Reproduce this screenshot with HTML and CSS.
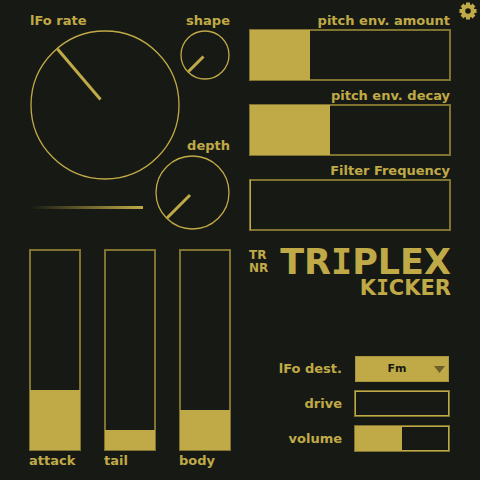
FILE: index.html
```html
<!DOCTYPE html>
<html lang="en">
<head>
<meta charset="utf-8">
<meta name="viewport" content="width=device-width, initial-scale=1">
<title>Triplex Kicker</title>
<link rel="stylesheet" href="styles.css">
</head>
<body>
<main class="panel">
  <section class="knobs">
    <div class="lfo">
      <label class="label" for="rate">lFo rate</label>
      <div class="knob knob-large">
        <svg viewBox="0 0 150 150" aria-hidden="true"><circle cx="75" cy="75" r="74"/><path d="M27.5 19L70.500 69.500"/></svg>
        <input id="rate" type="range" value="35">
      </div>
      <div class="trace"></div>
    </div>
    <div class="side">
      <div class="side-item">
        <label class="label" for="shape">shape</label>
        <div class="knob knob-small">
          <svg viewBox="0 0 50 50" aria-hidden="true"><circle cx="25" cy="25" r="24"/><path d="M23.500 26.500L8.500 41.500"/></svg>
          <input id="shape" type="range" value="0">
        </div>
      </div>
      <div class="side-item">
        <label class="label" for="depth">depth</label>
        <div class="knob knob-medium">
          <svg viewBox="0 0 75 75" aria-hidden="true"><circle cx="37.500" cy="37.500" r="36.500"/><path d="M35 40L12 63"/></svg>
          <input id="depth" type="range" value="0">
        </div>
      </div>
    </div>
  </section>

  <section class="bars">
    <div class="bar-row">
      <label class="label" for="amount">pitch env. amount</label>
      <input class="bar" id="amount" type="range" value="30" style="--value: 30%">
    </div>
    <div class="bar-row">
      <label class="label" for="decay">pitch env. decay</label>
      <input class="bar" id="decay" type="range" value="40" style="--value: 40%">
    </div>
    <div class="bar-row">
      <label class="label" for="filter">Filter Frequency</label>
      <input class="bar" id="filter" type="range" value="0" style="--value: 0%">
    </div>
  </section>

  <section class="columns">
    <div class="column">
      <input class="bar bar-vertical" id="attack" type="range" value="30" style="--value: 30%">
      <label class="label" for="attack">attack</label>
    </div>
    <div class="column">
      <input class="bar bar-vertical" id="tail" type="range" value="10" style="--value: 10%">
      <label class="label" for="tail">tail</label>
    </div>
    <div class="column">
      <input class="bar bar-vertical" id="body" type="range" value="20" style="--value: 20%">
      <label class="label" for="body">body</label>
    </div>
  </section>

  <section class="output">
    <header class="brand">
      <div class="brand-top">
        <div class="maker">TR<br>NR</div>
        <h1 class="name">TR<span class="slab">I</span>PLEX</h1>
      </div>
      <p class="model">K<span class="slab">I</span>CKER</p>
    </header>
    <div class="settings">
      <label class="label" for="dest">lFo dest.</label>
      <div class="picker">
        <select id="dest"><option>Fm</option></select>
        <svg class="arrow" viewBox="0 0 11 7" aria-hidden="true"><path d="M0 0H11L5.500 7Z"/></svg>
      </div>
      <label class="label" for="drive">drive</label>
      <input class="bar bar-small" id="drive" type="range" value="0" style="--value: 0%">
      <label class="label" for="volume">volume</label>
      <input class="bar bar-small" id="volume" type="range" value="50" style="--value: 50%">
    </div>
  </section>
</main>
<button class="gear" type="button" aria-label="Settings">
  <svg viewBox="-9 -9 18 18" aria-hidden="true">
    <g><rect x="-2" y="-8.500" width="4" height="17"/><rect x="-2" y="-8.500" width="4" height="17" transform="rotate(45)"/><rect x="-2" y="-8.500" width="4" height="17" transform="rotate(90)"/><rect x="-2" y="-8.500" width="4" height="17" transform="rotate(135)"/><circle r="6.800"/></g>
    <circle class="gear-hole" r="2.800"/>
  </svg>
</button>
</body>
</html>
```

FILE: styles.css
```css
:root {
  --ground: #171a14;
  --gold: #c0aa47;
  --dim: #80732f;
}

* {
  box-sizing: border-box;
}

body {
  margin: 0;
  min-height: 100vh;
  background: var(--ground);
  color: var(--gold);
  font-family: "DejaVu Sans", sans-serif;
  font-size: 13px;
  font-weight: bold;
}

.panel {
  display: grid;
  grid-template-columns: 1fr 1fr;
  gap: 18px;
  padding: 13px 29px 0;
}

.label {
  display: block;
  line-height: 16px;
  white-space: nowrap;
}

/* Knobs */
.knobs {
  display: flex;
  justify-content: space-between;
  padding: 0 1px 1px;
}

.lfo {
  width: 150px;
}

.side {
  display: flex;
  flex-direction: column;
  justify-content: space-between;
  align-items: flex-end;
  width: 50px;
}

.side-item {
  display: flex;
  flex-direction: column;
  align-items: flex-end;
}

.knob {
  position: relative;
  margin-top: 1px;
}

.knob-large {
  width: 150px;
  height: 150px;
}

.knob-medium {
  width: 75px;
  height: 75px;
}

.knob-small {
  width: 50px;
  height: 50px;
}

.knob svg {
  display: block;
  fill: none;
  stroke: var(--gold);
}

.knob circle {
  stroke-width: 1.3px;
}

.knob path {
  stroke-width: 3px;
}

.knob input {
  position: absolute;
  inset: 0;
  width: 100%;
  height: 100%;
  margin: 0;
  opacity: 0;
}

.trace {
  width: 113px;
  height: 3px;
  margin-top: 26px;
  background: linear-gradient(to right, transparent, var(--gold));
}

/* Bars */
.bar {
  appearance: none;
  display: block;
  width: 100%;
  height: 52px;
  margin: 0;
  border: 1px solid var(--dim);
  background:
    linear-gradient(var(--gold), var(--gold)) left / max(1px, var(--value)) 100% no-repeat,
    linear-gradient(var(--ground), var(--ground)) center / calc(100% - 2px) calc(100% - 2px) no-repeat,
    var(--dim);
}

.bar::-webkit-slider-thumb {
  appearance: none;
  width: 1px;
  height: 1px;
  background: transparent;
}

.bars {
  display: flex;
  flex-direction: column;
  gap: 7px;
}

.bar-row .label {
  padding-right: 1px;
  text-align: right;
}

.columns {
  display: flex;
  justify-content: space-between;
}

.column {
  width: 52px;
}

.column .label {
  margin-top: 2px;
}

.bar-vertical {
  writing-mode: vertical-lr;
  direction: rtl;
  width: 52px;
  height: 202px;
  background:
    linear-gradient(var(--gold), var(--gold)) bottom / 100% var(--value) no-repeat,
    linear-gradient(var(--ground), var(--ground)) center / calc(100% - 2px) calc(100% - 2px) no-repeat,
    var(--dim);
}

.bar-small {
  height: 27px;
  background:
    linear-gradient(var(--gold), var(--gold)) left / max(1px, var(--value)) 100% no-repeat,
    linear-gradient(var(--ground), var(--ground)) center / calc(100% - 2px) calc(100% - 2px) no-repeat,
    var(--gold);
}

/* Brand and output */
.output {
  display: flex;
  flex-direction: column;
  justify-content: space-between;
  padding-bottom: 17px;
}

.brand-top {
  display: flex;
  justify-content: space-between;
  align-items: center;
}

.maker {
  font-size: 12px;
  line-height: 13px;
}

.name,
.model {
  margin: 0;
  font-weight: bold;
}

.name {
  font-size: 35px;
  line-height: 26px;
}

.model {
  margin-top: 4px;
  font-size: 21px;
  line-height: 18px;
  text-align: right;
}

.slab {
  font-family: "DejaVu Sans Mono", monospace;
}

.settings {
  display: grid;
  grid-template-columns: 1fr 96px;
  gap: 8px 12px;
  align-items: center;
  padding-right: 1px;
}

.settings .label {
  text-align: right;
}

.picker {
  position: relative;
  height: 27px;
  padding: 1px 1px 0;
}

.picker select {
  appearance: none;
  width: 100%;
  height: 26px;
  padding: 0 10px 2px 0;
  border: 1px solid #a8963e;
  border-radius: 0;
  background: var(--gold);
  color: var(--ground);
  font: bold 11px "DejaVu Sans", sans-serif;
  text-align: center;
  text-align-last: center;
}

.arrow {
  position: absolute;
  top: 11px;
  right: 5px;
  width: 11px;
  fill: #6b6029;
  pointer-events: none;
}

.gear {
  position: absolute;
  top: 2px;
  right: 3px;
  width: 18px;
  height: 18px;
  padding: 0;
  border: 0;
  background: none;
}

.gear svg {
  display: block;
  fill: var(--gold);
}

.gear .gear-hole {
  fill: var(--ground);
}
```
